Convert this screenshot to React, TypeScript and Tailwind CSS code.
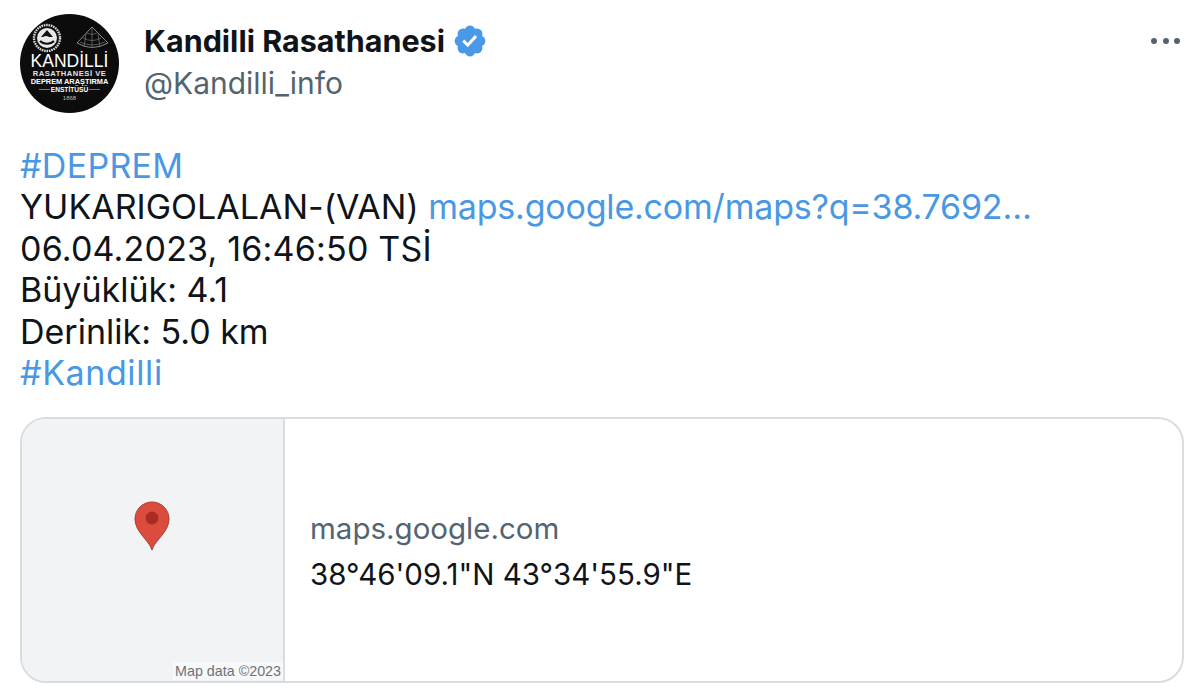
const Avatar = () => (
  <div className="w-[99px] h-[99px] shrink-0 rounded-full bg-[#0c0c0c] text-white overflow-hidden flex flex-col items-center font-['Liberation_Sans',sans-serif]">
    <svg viewBox="0 0 99 40" className="w-[99px] h-[40px] shrink-0">
      <circle cx="27" cy="24" r="13" fill="none" stroke="#d8d8d8" strokeWidth="2.4" strokeDasharray="1.6 0.8" />
      <circle cx="27" cy="24" r="10" fill="#e8e8e8" />
      <path d="M20 27c3.5 3.5 10.5 3.5 14 0" fill="none" stroke="#111" strokeWidth="2" />
      <path d="M27 16l6 7h-4c-2-1.500-4-1.500-6 0h-2z" fill="#111" />
      <path d="M72 13 88 29Q72 38 57 29Z" fill="none" stroke="#a8a8a8" strokeWidth="0.8" />
      <path d="M72 13V34M66 20 64 33M78 20 80 33M60 28Q72 34 85 28M63 24Q72 29 81 24M67 19Q72 22 77 19" fill="none" stroke="#8c8c8c" strokeWidth="0.6" />
    </svg>
    <div className="text-[17.5px] leading-[16px] mt-[-1px] whitespace-nowrap">KANDİLLİ</div>
    <div className="text-[7.6px] leading-[8px] mt-[1px] font-bold tracking-[0.5px] whitespace-nowrap text-[#e4e4e4]">RASATHANESİ VE</div>
    <div className="text-[7.4px] leading-[8px] font-bold whitespace-nowrap">DEPREM ARAŞTIRMA</div>
    <div className="flex items-center gap-[1px] text-[6.6px] leading-[7px] font-bold whitespace-nowrap">
      <span className="w-[11px] h-px bg-[#777]" />
      ENSTİTÜSÜ
      <span className="w-[11px] h-px bg-[#777]" />
    </div>
    <div className="text-[6px] leading-[8px] mt-[1px] text-[#bbb]">1868</div>
  </div>
);

const VerifiedBadge = () => (
  <svg viewBox="0 0 22 22" className="w-[36px] h-[36px] ml-[7px]">
    <path
      fill="#4a99e9"
      d="M20.396 11c-.018-.646-.215-1.275-.57-1.816-.354-.54-.852-.972-1.438-1.246.223-.607.27-1.264.14-1.897-.131-.634-.437-1.218-.882-1.687-.47-.445-1.053-.75-1.687-.882-.633-.13-1.29-.083-1.897.14-.273-.587-.704-1.086-1.245-1.44S11.647 1.62 11 1.604c-.646.017-1.273.213-1.813.568s-.969.854-1.24 1.44c-.608-.223-1.267-.272-1.902-.14-.635.13-1.22.436-1.69.882-.445.47-.749 1.055-.878 1.688-.13.633-.08 1.29.144 1.896-.587.274-1.087.705-1.443 1.245-.356.54-.555 1.17-.574 1.817.02.647.218 1.276.574 1.817.356.54.856.972 1.443 1.245-.224.606-.274 1.263-.144 1.896.13.634.433 1.218.877 1.688.47.443 1.054.747 1.687.878.633.132 1.29.084 1.897-.136.274.586.705 1.084 1.246 1.439.54.354 1.17.551 1.816.569.647-.016 1.276-.213 1.817-.567s.972-.854 1.245-1.44c.604.239 1.266.296 1.903.164.636-.132 1.22-.447 1.68-.907.46-.46.776-1.044.908-1.681s.075-1.299-.165-1.903c.586-.274 1.084-.705 1.439-1.246.354-.54.551-1.17.569-1.816z"
    />
    <path fill="#fff" d="M9.662 14.85l-3.429-3.428 1.293-1.302 2.072 2.072 4.4-4.794 1.347 1.246z" />
  </svg>
);

const Pin = () => (
  <svg viewBox="0 0 36 50" className="w-[36px] h-[50px]">
    <path d="M18 49C15 39 1 31 1 18a17 17 0 0 1 34 0C35 31 21 39 18 49Z" fill="#dc4c3e" stroke="#b5392f" strokeWidth="1" />
    <circle cx="18" cy="17" r="6.5" fill="#a92c22" />
  </svg>
);

export default function App() {
  return (
    <div className="w-[1200px] h-[698px] bg-white px-5 pt-[14px] font-['Inter',sans-serif] [font-feature-settings:'calt'_0] overflow-hidden">
      {/* Header */}
      <div className="flex">
        <Avatar />
        <div className="ml-[25px] mt-[7px]">
          <div className="flex items-center h-[40px]">
            <span className="text-[30.5px] font-bold text-[#0f1419] leading-none">Kandilli Rasathanesi</span>
            <VerifiedBadge />
          </div>
          <div className="text-[30px] leading-[42px] mt-[1px] text-[#536471]">@Kandilli_info</div>
        </div>
        <div className="ml-auto mt-[24px] flex gap-[5.5px] h-[6px]">
          <span className="w-[6px] h-[6px] rounded-full bg-[#536471]" />
          <span className="w-[6px] h-[6px] rounded-full bg-[#536471]" />
          <span className="w-[6px] h-[6px] rounded-full bg-[#536471]" />
        </div>
      </div>

      {/* Tweet text */}
      <div className="mt-[32px] text-[34px] leading-[41.4px] text-[#0f1419]">
        <div className="text-[#4a98e4] tracking-[0.3px]">#DEPREM</div>
        <div>
          YUKARIGOLALAN-(VAN) <span className="text-[#4a98e4] tracking-[-0.2px]">maps.google.com/maps?q=38.7692…</span>
        </div>
        <div className="tracking-[0.2px]">06.04.2023, 16:46:50 TSİ</div>
        <div>Büyüklük: 4.1</div>
        <div>Derinlik: 5.0 km</div>
        <div className="text-[#4a98e4] tracking-[0.6px]">#Kandilli</div>
      </div>

      {/* Link card */}
      <div className="mt-[24px] w-[1164px] h-[266px] flex rounded-[26px] border-2 border-[#d8dde1] overflow-hidden">
        <div className="relative w-[263px] shrink-0 bg-[#f1f3f5] border-r-2 border-[#d8dde1] flex justify-center">
          <div className="mt-[82px] mr-[1px]">
            <Pin />
          </div>
          <span className="absolute right-0 bottom-[1px] bg-[#f7f8f9] px-[2px] text-[14.3px] leading-[18px] text-[#6e7276] font-['Liberation_Sans',sans-serif]">
            Map data ©2023
          </span>
        </div>
        <div className="flex flex-col justify-center pl-[25px] pt-[2px] text-[29.5px] leading-[46px]">
          <div className="text-[#536471]">maps.google.com</div>
          <div className="text-[#0f1419]">38°46'09.1"N 43°34'55.9"E</div>
        </div>
      </div>
    </div>
  );
}
